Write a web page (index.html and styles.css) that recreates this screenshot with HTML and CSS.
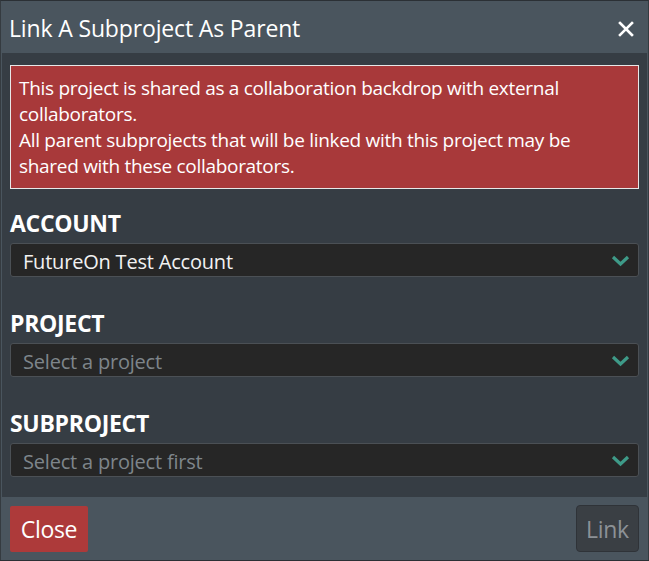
FILE: index.html
```html
<!DOCTYPE html>
<html>
<head>
<meta charset="utf-8">
<link rel="stylesheet" href="styles.css">
</head>
<body>
<div class="dialog">
  <div class="header">
    <div class="title">Link A Subproject As Parent</div>
    <button class="close-x" aria-label="Close">
      <svg width="16" height="16" viewBox="0 0 16 16"><path d="M2 2 L14 14 M14 2 L2 14" stroke="#fff" stroke-width="2.6" stroke-linecap="square" fill="none"/></svg>
    </button>
  </div>
  <div class="body">
    <div class="warning">This project is shared as a collaboration backdrop with external collaborators.<br>All parent subprojects that will be linked with this project may be shared with these collaborators.</div>
    <div class="field">
      <div class="label">ACCOUNT</div>
      <div class="select"><span class="value">FutureOn Test Account</span><svg class="chev" width="19" height="12" viewBox="0 0 19 12"><path d="M2 2 L9.5 9 L17 2" stroke="#3e9a88" stroke-width="3.2" fill="none"/></svg></div>
    </div>
    <div class="field">
      <div class="label">PROJECT</div>
      <div class="select"><span class="placeholder">Select a project</span><svg class="chev" width="19" height="12" viewBox="0 0 19 12"><path d="M2 2 L9.5 9 L17 2" stroke="#3e9a88" stroke-width="3.2" fill="none"/></svg></div>
    </div>
    <div class="field">
      <div class="label">SUBPROJECT</div>
      <div class="select"><span class="placeholder">Select a project first</span><svg class="chev" width="19" height="12" viewBox="0 0 19 12"><path d="M2 2 L9.5 9 L17 2" stroke="#3e9a88" stroke-width="3.2" fill="none"/></svg></div>
    </div>
  </div>
  <div class="footer">
    <button class="btn btn-close">Close</button>
    <button class="btn btn-link" disabled>Link</button>
  </div>
</div>
</body>
</html>
```
FILE: styles.css
```css
html, body {
  margin: 0;
  padding: 0;
  background: #2b3035;
}
body {
  font-family: "Open Sans", "Noto Sans", sans-serif;
  color: #fff;
  width: 649px;
  height: 561px;
  overflow: hidden;
}
.dialog {
  background: #4a555e;
  border-top: 1px solid #2b3035;
  border-left: 1px solid #353b40;
  border-right: 1px solid #353b40;
  height: 560px;
  box-sizing: border-box;
  display: flex;
  flex-direction: column;
}
.header {
  height: 52px;
  display: flex;
  align-items: center;
  justify-content: space-between;
  padding: 0 14px 0 8px;
}
.title {
  font-size: 23px;
  letter-spacing: -0.15px;
  color: #fff;
  margin-top: 1px;
}
.close-x {
  background: none;
  border: none;
  padding: 0;
  display: flex;
  margin-top: 4px;
}
.body {
  background: #363d44;
  margin: 0 1px;
  padding: 12px 8px 20px 8px;
  display: flex;
  flex-direction: column;
}
.warning {
  background: #a8393a;
  border: 1px solid #e8e8e8;
  padding: 9px 8px 9px 8px;
  font-size: 19px;
  line-height: 26px;
  letter-spacing: -0.3px;
  color: #fff;
}
.field {
  margin-top: 19px;
}
.field + .field {
  margin-top: 31px;
}
.label {
  font-size: 23px;
  font-weight: 700;
  line-height: 30px;
  letter-spacing: -0.3px;
  margin-bottom: 5px;
}
.select {
  height: 34px;
  box-sizing: border-box;
  background: #262626;
  border: 1px solid #4b5055;
  border-radius: 3px;
  display: flex;
  align-items: center;
  justify-content: space-between;
  padding: 2px 8px 0 12px;
  font-size: 20px;
  letter-spacing: -0.2px;
}
.value {
  color: #f2f2f2;
}
.placeholder {
  color: #7e858b;
}
.chev {
  display: block;
}
.footer {
  flex: 1;
  display: flex;
  justify-content: space-between;
  align-items: flex-start;
  padding: 8px 9px 0 9px;
}
.btn {
  font-family: "Open Sans", "Noto Sans", sans-serif;
  font-size: 23px;
  letter-spacing: -0.3px;
  height: 47px;
  border-radius: 2px;
  padding: 0;
}
.btn-close {
  background: #ad3a3a;
  color: #fff;
  border: none;
  width: 78px;
  margin-top: 1px;
  height: 46px;
}
.btn-link {
  background: #3a3f44;
  color: #8c9196;
  border: 1px solid #2f3338;
  border-radius: 4px;
  width: 63px;
}
```
